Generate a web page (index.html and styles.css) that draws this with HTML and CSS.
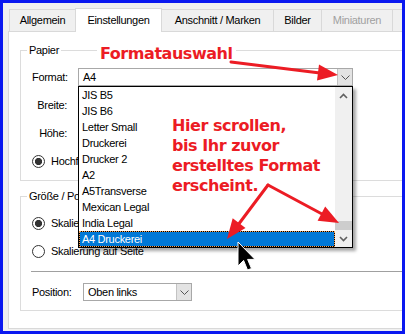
FILE: index.html
```html
<!DOCTYPE html>
<html lang="de">
<head>
    <meta charset="UTF-8">
    <meta name="viewport" content="width=device-width, initial-scale=1.0">
    <title>Einstellungen</title>
    <link rel="stylesheet" href="styles.css">
</head>
<body>

    <!-- Dialog -->
    <div class="frame">
        <div class="tabs">
            <div class="tab tab-1">Allgemein</div>
            <div class="tab tab-2 active">Einstellungen</div>
            <div class="tab tab-3">Anschnitt / Marken</div>
            <div class="tab tab-4">Bilder</div>
            <div class="tab tab-5 disabled">Miniaturen</div>
            <div class="tab tab-6 disabled">Farben</div>
        </div>

        <div class="panel">
            <fieldset class="group">
                <legend>Papier</legend>
                <div class="paper-body">
                    <label class="lbl">Format:</label>
                    <div class="combo combo-format">
                        <span>A4</span>
                        <span class="btn">
                            <svg width="9" height="5" viewBox="0 0 9 5"><polyline points="0.5,0.5 4.5,4.5 8.5,0.5" fill="none" stroke="#555" stroke-width="1"/></svg>
                        </span>

                        <!-- offene Liste -->
                        <div class="list">
                            <div class="items">
                                <div class="item">JIS B5</div>
                                <div class="item">JIS B6</div>
                                <div class="item">Letter Small</div>
                                <div class="item">Druckerei</div>
                                <div class="item">Drucker 2</div>
                                <div class="item">A2</div>
                                <div class="item">A5Transverse</div>
                                <div class="item">Mexican Legal</div>
                                <div class="item">India Legal</div>
                                <div class="item selected">A4 Druckerei</div>
                            </div>
                            <div class="scrollbar">
                                <div class="sb-btn">
                                    <svg width="9" height="6" viewBox="0 0 9 6"><polyline points="1,5 4.5,1.5 8,5" fill="none" stroke="#606060" stroke-width="1.6"/></svg>
                                </div>
                                <div class="sb-track"><div class="sb-thumb"></div></div>
                                <div class="sb-btn">
                                    <svg width="9" height="6" viewBox="0 0 9 6"><polyline points="1,1 4.5,4.5 8,1" fill="none" stroke="#606060" stroke-width="1.6"/></svg>
                                </div>
                            </div>
                        </div>
                    </div>

                    <label class="lbl">Breite:</label>
                    <div class="field"></div>

                    <label class="lbl">Höhe:</label>
                    <div class="field"></div>

                    <div class="radio-row wide">
                        <span class="radio checked"></span>
                        <span>Hochformat</span>
                    </div>
                </div>
            </fieldset>

            <fieldset class="group group-size">
                <legend>Größe / Position</legend>
                <div class="size-body">
                    <div class="radio-row">
                        <span class="radio checked"></span>
                        <span>Skalierung</span>
                    </div>
                    <div class="radio-row">
                        <span class="radio"></span>
                        <span>Skalierung auf Seite</span>
                    </div>
                    <div class="separator"></div>
                    <div class="pos-row">
                        <label class="lbl-pos">Position:</label>
                        <div class="combo combo-pos">
                            <span>Oben links</span>
                            <span class="btn">
                                <svg width="9" height="5" viewBox="0 0 9 5"><polyline points="0.5,0.5 4.5,4.5 8.5,0.5" fill="none" stroke="#555" stroke-width="1"/></svg>
                            </span>
                        </div>
                    </div>
                </div>
            </fieldset>
        </div>
    </div>

    <!-- Anmerkungen -->
    <div class="note note-title">Formatauswahl</div>
    <div class="note note-hint">Hier scrollen,<br>bis Ihr zuvor<br>erstelltes Format<br>erscheint.</div>

    <svg class="arrows" width="406" height="335" viewBox="0 0 406 335">
        <g stroke="#ec1c24" stroke-width="3" fill="none" stroke-linecap="round">
            <line x1="231" y1="62" x2="320" y2="73"/>
            <line x1="268" y1="185" x2="238" y2="225"/>
            <line x1="268" y1="185" x2="322" y2="214"/>
        </g>
        <g fill="#ec1c24">
            <polygon points="338,75 319,64.6 317,80.5"/>
            <polygon points="227,239 232.7,218.3 245.5,227.9"/>
            <polygon points="339,223 325.2,206.5 317.6,220.7"/>
        </g>
    </svg>

    <!-- Mauszeiger -->
    <svg class="cursor" width="20" height="32" viewBox="0 0 20 32">
        <polygon points="1,1 1,25 6.6,19.4 10.5,29 14.5,27.5 10.6,18.4 18,18.4" fill="#000" stroke="#fff" stroke-width="1"/>
    </svg>

</body>
</html>
```

FILE: styles.css
```css
/* Grundstil */
body {
    margin: 0;
    position: relative;
    width: 406px;
    height: 335px;
    overflow: hidden;
    background: #fff;
    font-family: "Liberation Sans", Arial, sans-serif;
    font-size: 11px;
    letter-spacing: -0.3px;
    color: #000;
}

/* Blauer Rahmen */
.frame {
    box-sizing: border-box;
    width: 405px;
    height: 334px;
    border: 3px solid #0a18f0;
    background: #f0f0f0;
    padding: 5px 0 0 5px;
    overflow: hidden;
}

/* Reiter */
.tabs {
    display: flex;
    align-items: flex-end;
    height: 24px;
    padding-left: 1px;
}

.tab {
    box-sizing: border-box;
    height: 22px;
    margin: 0 -1px 1px 0;
    border: 1px solid #d9d9d9;
    border-bottom: none;
    background: #f0f0f0;
    text-align: center;
    line-height: 21px;
    white-space: nowrap;
    flex-shrink: 0;
}

.tab.active {
    position: relative;
    height: 24px;
    margin-bottom: 0;
    background: #fff;
    line-height: 22px;
}

.tab.disabled {
    color: #a0a0a0;
}

.tab-1 { width: 67px; }
.tab-2 { width: 87px; }
.tab-3 { width: 113px; }
.tab-4 { width: 49px; }
.tab-5 { width: 72px; }
.tab-6 { width: 70px; }

.panel {
    box-sizing: border-box;
    width: 420px;
    height: 298px;
    margin-top: -1px;
    border: 1px solid #d9d9d9;
    background: #fff;
    padding-left: 11px;
}

/* Gruppen */
.group {
    width: 400px;
    margin: 12px 0 0;
    padding: 0;
    border: 1px solid #dcdcdc;
    min-width: 0;
}

.group legend {
    margin-left: 6px;
    padding: 0 2px;
    line-height: 13px;
}

.group-size {
    margin-top: 9px;
}

.paper-body {
    display: grid;
    grid-template-columns: 35px auto;
    grid-auto-rows: 20px;
    column-gap: 11px;
    row-gap: 8px;
    padding: 10px 0 9px 11px;
}

.lbl {
    align-self: center;
    text-align: right;
}

.field {
    box-sizing: border-box;
    width: 90px;
    height: 18px;
    margin-top: 1px;
    border: 1px solid #a8a8a8;
}

.wide {
    grid-column: 1 / -1;
}

.radio-row {
    display: flex;
    align-items: center;
    gap: 6px;
    height: 20px;
}

.radio {
    box-sizing: border-box;
    width: 13px;
    height: 13px;
    border: 1px solid #333;
    border-radius: 50%;
    background: #fff;
}

.radio.checked {
    background: radial-gradient(circle, #333 0, #333 3.3px, #fff 3.9px);
}

.size-body {
    display: flex;
    flex-direction: column;
    gap: 8px;
    padding: 10px 0 8px 11px;
}

.separator {
    height: 1px;
    margin: 2px 0 2px -1px;
    background: #a0a0a0;
}

.pos-row {
    display: flex;
    gap: 11px;
    height: 20px;
}

.lbl-pos {
    width: 40px;
    align-self: center;
}

/* Kombinationsfeld */
.combo {
    position: relative;
    box-sizing: border-box;
    display: flex;
    align-items: center;
    height: 18px;
    margin-top: 1px;
    border: 1px solid #a8a8a8;
    background: #fff;
    padding-left: 4px;
}

.combo-format {
    width: 275px;
}

.combo-pos {
    width: 109px;
}

.combo .btn {
    display: flex;
    align-items: center;
    justify-content: center;
    box-sizing: border-box;
    width: 15px;
    height: 16px;
    margin-left: auto;
    border-left: 1px solid #c3c3c3;
    background: #e3e3e3;
}

/* Aufgeklappte Liste */
.list {
    position: absolute;
    top: 17px;
    left: -1px;
    z-index: 5;
    box-sizing: border-box;
    display: flex;
    width: 275px;
    height: 162px;
    border: 1px solid #000;
    background: #fff;
    box-shadow: 3px 3px 3px rgba(0, 0, 0, 0.35);
}

.items {
    flex: 1;
}

.item {
    height: 16px;
    line-height: 16px;
    padding-left: 3px;
    white-space: nowrap;
}

.item.selected {
    background: #0078d7;
    color: #fff;
    box-shadow: inset 0 0 0 1px #000;
    outline: 1px dotted #f5a050;
    outline-offset: -1px;
}

.scrollbar {
    display: flex;
    flex-direction: column;
    width: 17px;
    background: #f0f0f0;
}

.sb-btn {
    display: flex;
    align-items: center;
    justify-content: center;
    height: 17px;
}

.sb-track {
    flex: 1;
    display: flex;
    flex-direction: column;
    justify-content: flex-end;
}

.sb-thumb {
    height: 9px;
    background: #cdcdcd;
}

/* Rote Hinweise */
.note {
    position: absolute;
    z-index: 10;
    font-family: "DejaVu Sans", Verdana, sans-serif;
    font-weight: bold;
    font-size: 16px;
    letter-spacing: -0.45px;
    line-height: 20px;
    color: #ec1c24;
    white-space: nowrap;
}

.note-title {
    left: 97px;
    top: 44px;
    padding: 0 3px;
    background: #fff;
}

.note-hint {
    left: 172px;
    top: 116px;
}

.arrows {
    position: absolute;
    left: 0;
    top: 0;
    z-index: 11;
}

.cursor {
    position: absolute;
    left: 237px;
    top: 241px;
    z-index: 12;
}
```
